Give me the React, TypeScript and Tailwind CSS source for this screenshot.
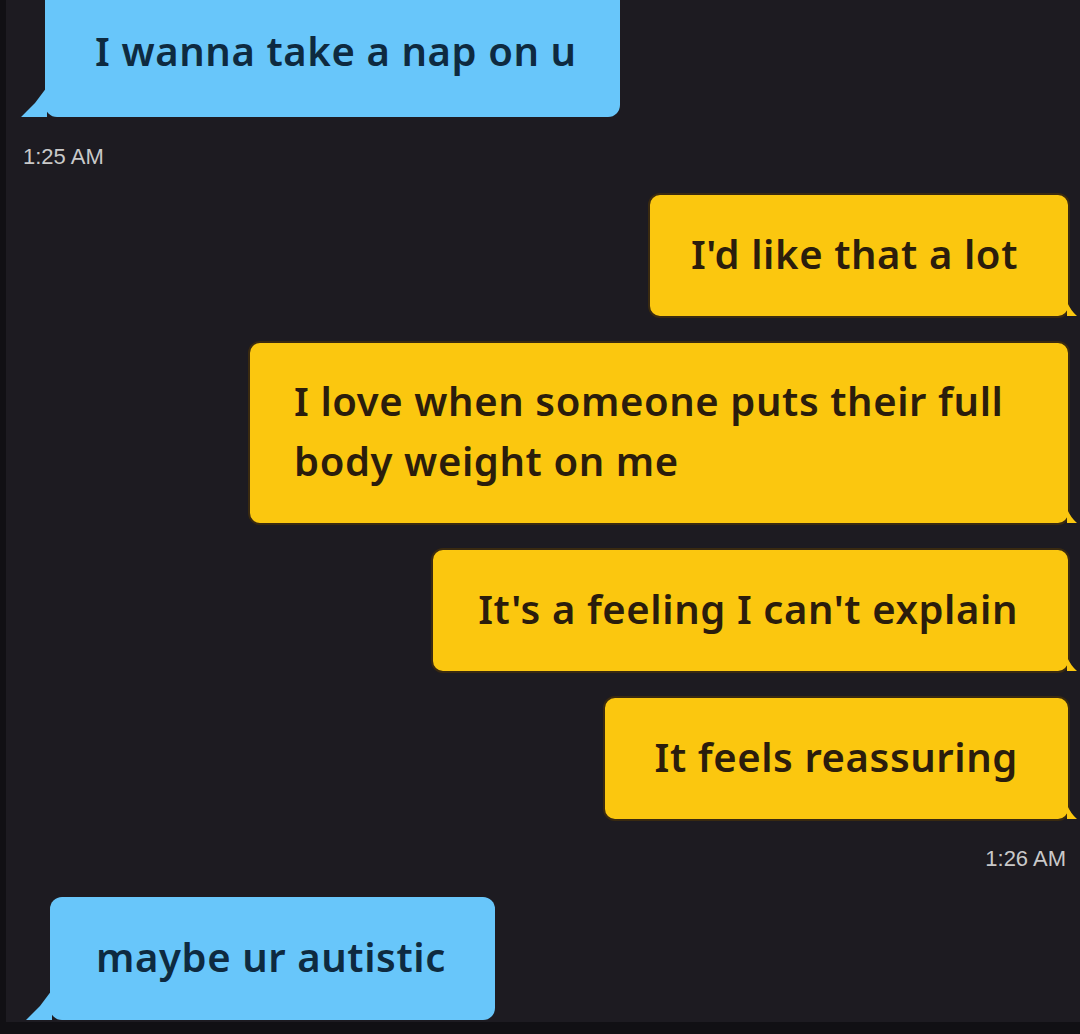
import React from 'react';

const BlueTail = () => (
  <svg className="absolute -left-[24px] bottom-0" width="26" height="30" viewBox="0 0 26 30">
    <path d="M26 0 L26 30 L0 30 L6 24 Q10 20 14 16 Z" fill="#68c6fa" />
  </svg>
);

const YellowTail = () => (
  <svg className="absolute -right-[9px] bottom-0" width="10" height="14" viewBox="0 0 10 14">
    <path d="M0 0 L0 14 L10 14 Q4 9 0 0 Z" fill="#fbc70f" />
  </svg>
);

const Sent = ({ children, width, tall = false }: { children: React.ReactNode; width: string; tall?: boolean }) => (
  <div className="flex justify-end pr-[10px]">
    <div
      className={`relative ${width} ${tall ? 'h-[184px] justify-start pl-[44px]' : 'h-[125px] justify-end pr-[50px]'} flex items-center rounded-[12px] bg-[#fbc70f] text-[#2b1d0c] border-2 border-[#3a2a10]`}
    >
      <div className="leading-[60px] pb-[4px]">{children}</div>
      <YellowTail />
    </div>
  </div>
);

const App = () => {
  return (
    <div
      className="w-[1080px] h-[1034px] overflow-hidden bg-[#1d1b21] flex flex-col border-l-[6px] border-[#111014]"
      style={{ fontFamily: '"Noto Sans", "Open Sans", sans-serif' }}
    >
      <div className="pl-[39px] -mt-[12px]">
        <div className="relative w-[575px] h-[129px] flex items-center pl-[50px] pb-[4px] rounded-[12px] bg-[#68c6fa] text-[#0e2a40] text-[40px] font-semibold tracking-[0.6px]">
          I wanna take a nap on u
          <BlueTail />
        </div>
      </div>

      <div className="pl-[17px] mt-[28px] text-[22px] text-[#c9c9c9] leading-[24px]" style={{ fontFamily: '"Liberation Sans", Arial, sans-serif' }}>
        1:25 AM
      </div>

      <div className="mt-[24px] flex flex-col gap-[23px] text-[40px] font-semibold tracking-[0.6px]">
        <Sent width="w-[422px]">I'd like that a lot</Sent>
        <Sent width="w-[822px]" tall>
          I love when someone puts their full
          <br />
          body weight on me
        </Sent>
        <Sent width="w-[639px]">It's a feeling I can't explain</Sent>
        <Sent width="w-[467px]">It feels reassuring</Sent>
      </div>

      <div className="self-end pr-[14px] mt-[26px] text-[22px] text-[#c9c9c9] leading-[24px]" style={{ fontFamily: '"Liberation Sans", Arial, sans-serif' }}>
        1:26 AM
      </div>

      <div className="pl-[44px] mt-[26px]">
        <div className="relative w-[445px] h-[123px] flex items-center pl-[46px] pb-[4px] rounded-[12px] bg-[#68c6fa] text-[#0e2a40] text-[40px] font-semibold tracking-[0.6px]">
          maybe ur autistic
          <BlueTail />
        </div>
      </div>

      <div className="mt-auto h-[12px] bg-[#111014]" />
    </div>
  );
};

export default App;
